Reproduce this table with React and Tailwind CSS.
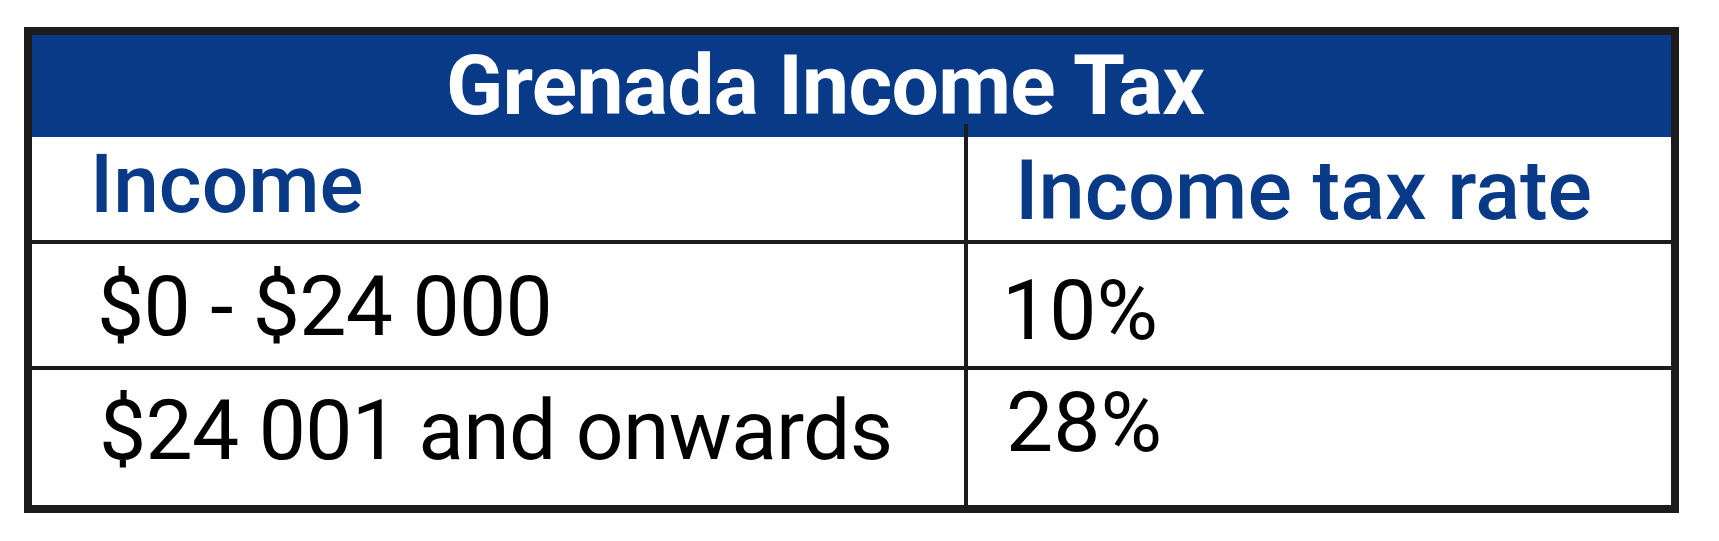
import React from "react";

const rows = [
  { income: "$0 - $24 000", rate: "10%", h: "h-[126px]", lp: "pl-[65px] pt-[21px]", rp: "pl-[34px] pt-[25px]" },
  { income: "$24 001 and onwards", rate: "28%", h: "h-[135px]", lp: "pl-[67px] pt-[19px]", rp: "pl-[38px] pt-[11px]" },
];

export default function App() {
  return (
    <div className="w-[1719px] h-[541px] bg-white font-['Roboto',sans-serif] pt-[27px] pl-[24px]">
      <div className="relative w-[1655px] h-[486px] border-[8px] border-[#1c1c1c]">
        {/* title bar */}
        <div className="h-[102px] bg-[#093a87] flex items-center pl-[414px]">
          <h1 className="text-[84px] leading-none font-bold tracking-[-0.7px] text-white">Grenada Income Tax</h1>
        </div>

        {/* column heads */}
        <div className="grid grid-cols-[936px_703px] h-[107px] border-b-4 border-[#1c1c1c]">
          <div className="border-r-4 border-[#1c1c1c] pl-[58px] pt-[6px]">
            <span className="text-[82px] leading-none font-medium text-[#093a87]">Income</span>
          </div>
          <div className="pl-[47px] pt-[12px]">
            <span className="text-[83px] leading-none font-medium text-[#093a87]">Income tax rate</span>
          </div>
        </div>

        {rows.map((r, i) => (
          <div
            key={i}
            className={`grid grid-cols-[936px_703px] ${r.h} ${i === 0 ? "border-b-4 border-[#1c1c1c]" : ""}`}
          >
            <div className={`border-r-4 border-[#1c1c1c] ${r.lp}`}>
              <span className="text-[84px] leading-none tracking-[-0.7px] text-black">{r.income}</span>
            </div>
            <div className={r.rp}>
              <span className="text-[84px] leading-none text-black">{r.rate}</span>
            </div>
          </div>
        ))}

        {/* divider overshoots into the title bar */}
        <div className="absolute left-[932px] top-[89px] w-[4px] h-[14px] bg-[#1c1c1c]" />
      </div>
    </div>
  );
}
